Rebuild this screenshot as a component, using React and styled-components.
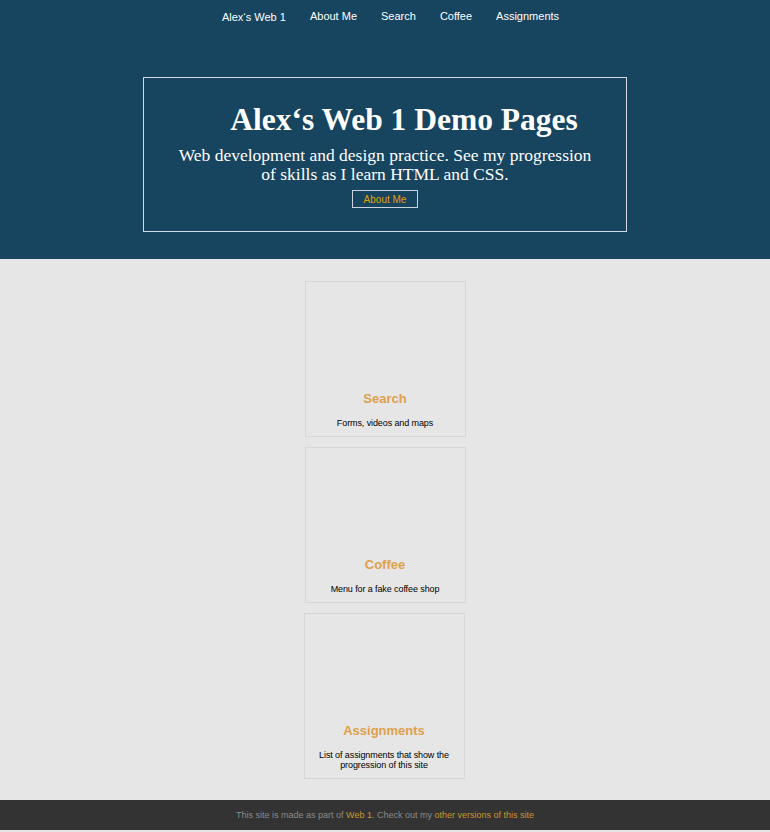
import React from "react";
import styled, { createGlobalStyle } from "styled-components";

const GlobalStyle = createGlobalStyle`
  body {
    margin: 0;
    background-color: #e6e6e6;
    font-family: "Liberation Sans", Arial, sans-serif;
  }
`;

const Header = styled.header`
  background-color: #17445e;
  padding-bottom: 27px;
`;

const Nav = styled.nav`
  display: flex;
  justify-content: center;
  align-items: center;
  height: 32px;
  padding-left: 11px;
`;

const NavLink = styled.a`
  color: #ffffff;
  font-size: 11px;
  padding: 0 12px;
  text-decoration: none;
  position: relative;
  top: ${(p) => (p.$brand ? "1px" : "0")};
`;

const Hero = styled.div`
  width: 484px;
  margin: 45px auto 0;
  border: 1px solid #d3dbe2;
  padding: 24px 30px 23px;
  box-sizing: border-box;
  display: flex;
  flex-direction: column;
  align-items: center;
  text-align: center;
  color: #ffffff;
  font-family: "Liberation Serif", "Times New Roman", serif;
`;

const Title = styled.h1`
  margin: 0;
  padding-left: 38px;
  font-size: 31.5px;
  line-height: 36px;
  font-weight: bold;
`;

const Subtitle = styled.p`
  margin: 8px 0 0;
  font-size: 17.5px;
  line-height: 19px;
  white-space: nowrap;
`;

const HeroButton = styled.a`
  margin-top: 6px;
  height: 18px;
  box-sizing: border-box;
  display: flex;
  align-items: center;
  padding: 0 11px;
  border: 1px solid #cdd5dc;
  color: #e0a000;
  font-family: "Liberation Sans", Arial, sans-serif;
  font-size: 10px;
  text-decoration: none;
`;

const Main = styled.main`
  display: flex;
  flex-direction: column;
  align-items: center;
  gap: 10px;
  padding: 22px 0 21px;
`;

const Card = styled.div`
  width: 161px;
  box-sizing: border-box;
  border: 1px solid #d7d7d7;
  padding: 0 10px 8px;
  display: flex;
  flex-direction: column;
  align-items: center;
  text-align: center;
  margin-left: ${(p) => p.$shift || 0}px;
`;

const Picture = styled.div`
  height: 108px;
  align-self: stretch;
`;

const CardTitle = styled.h2`
  margin: 0;
  font-size: 13px;
  line-height: 18px;
  font-weight: bold;
  color: #dea04b;
`;

const CardText = styled.p`
  margin: 10px 0 0;
  font-size: 9px;
  line-height: 10px;
  color: #000000;
  letter-spacing: -0.1px;
`;

const Footer = styled.footer`
  height: 30px;
  background-color: #333333;
  display: flex;
  justify-content: center;
  align-items: center;
  font-size: 9px;
  color: #8a8a8a;
`;

const FooterLink = styled.a`
  color: #c9962c;
  text-decoration: none;
`;

const cards = [
  { title: "Search", text: "Forms, videos and maps" },
  { title: "Coffee", text: "Menu for a fake coffee shop" },
  { title: "Assignments", text: "List of assignments that show the progression of this site", shift: -2 },
];

export default function App() {
  return (
    <>
      <GlobalStyle />
      <Header>
        <Nav>
          <NavLink $brand>Alex‘s Web 1</NavLink>
          <NavLink>About Me</NavLink>
          <NavLink>Search</NavLink>
          <NavLink>Coffee</NavLink>
          <NavLink>Assignments</NavLink>
        </Nav>
        <Hero>
          <Title>Alex‘s Web 1 Demo Pages</Title>
          <Subtitle>
            Web development and design practice. See my progression
            <br />
            of skills as I learn HTML and CSS.
          </Subtitle>
          <HeroButton>About Me</HeroButton>
        </Hero>
      </Header>
      <Main>
        {cards.map((c) => (
          <Card key={c.title} $shift={c.shift}>
            <Picture />
            <CardTitle>{c.title}</CardTitle>
            <CardText>{c.text}</CardText>
          </Card>
        ))}
      </Main>
      <Footer>
        This site is made as part of&nbsp;<FooterLink>Web 1</FooterLink>. Check out my&nbsp;
        <FooterLink>other versions of this site</FooterLink>
      </Footer>
    </>
  );
}
